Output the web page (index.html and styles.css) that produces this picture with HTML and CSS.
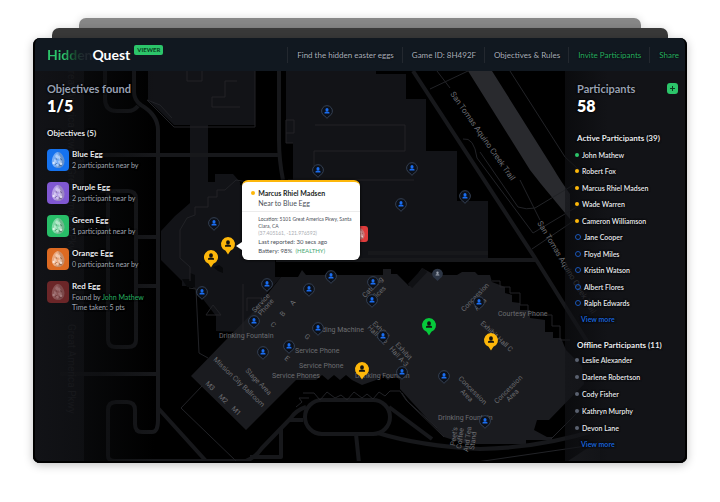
FILE: index.html
```html
<!DOCTYPE html>
<html lang="en">
<head>
<meta charset="utf-8">
<meta name="viewport" content="width=device-width, initial-scale=1">
<title>HiddenQuest Viewer</title>
<link rel="stylesheet" href="styles.css">
</head>
<body>
<svg class="defs" width="0" height="0" aria-hidden="true">
  <defs>
    <symbol id="egg" viewBox="0 0 22 22">
      <path d="M11 3C14 3 17.400 8 17.400 12.200C17.400 16.500 14.800 19 11.200 19C7.500 19 4.800 16.500 4.800 12.500C4.800 8 8 3 11 3Z" fill="#fff" opacity=".42"/>
      <path d="M11 3C14 3 17.400 8 17.400 12.200C17.400 16.500 14.800 19 11.200 19C10 19 8.800 18.700 7.800 18.200C13 17 15 12 11 3Z" fill="#000" opacity=".16"/>
      <path d="M8 7l2-2 2 3-2 2zM12 6l2 3-1 2-2-2zM7 10l2 1 1 3-3-1zM11 12l3-1 1 2-3 2zM9 15l2 0 1 2-2 1z" fill="#fff" opacity=".4"/>
      <circle cx="6.700" cy="14" r="1.200" fill="#fff" opacity=".7"/><circle cx="14" cy="14.700" r="1.200" fill="#fff" opacity=".7"/>
      <path d="M9 9l1 2M13 9l2 2M8 16l2-2M12 16l3 1" stroke="#000" stroke-width=".8" opacity=".3"/>
    </symbol>
    <symbol id="person" viewBox="0 0 10 10" overflow="visible">
      <path d="M5 .8a2.300 2.300 0 0 1 2.300 2.300v.8a2.300 2.300 0 0 1-4.600 0v-.8a2.300 2.300 0 0 1 2.300-2.300zM1.200 9V7.900Q1.200 6.500 3.200 6.400H6.800Q8.800 6.500 8.800 7.900V9Z"/>
    </symbol>
    <symbol id="pin" viewBox="0 0 14 16" overflow="visible">
      <path d="M7 14.400L4.800 12A5.400 5.400 0 1 1 9.200 12Z" fill="#0c1018" stroke="#344053"/>
      <use href="#person" x="3.700" y="3.500" width="6.600" height="6.600" fill="#1a6df0"/>
    </symbol>
    <symbol id="bigpin" viewBox="0 0 18 22" overflow="visible">
      <path d="M9 19.500L6.600 15.700A7 7 0 1 1 11.400 15.700Z"/>
      <use href="#person" x="5" y="4.600" width="8" height="8" fill="#111"/>
    </symbol>
  </defs>
</svg>
<div class="stage">
  <div class="sheet sheet-far"></div>
  <div class="sheet sheet-near"></div>
  <div class="window">
    <header class="topbar">
      <h1 class="logo"><span class="logo-hidden">Hidden</span>Quest</h1>
      <span class="badge">VIEWER</span>
      <nav class="nav">
        <span class="nav-item">Find the hidden easter eggs</span>
        <span class="nav-item">Game ID: 8H492F</span>
        <a class="nav-item" href="#rules">Objectives &amp; Rules</a>
        <a class="nav-item accent" href="#invite">Invite Participants</a>
        <a class="nav-item accent" href="#share">Share</a>
      </nav>
    </header>
    <main class="board">
      <svg class="map" viewBox="33 71 654 392" preserveAspectRatio="xMidYMid slice" role="img" aria-label="Venue map">
        <g fill="#121317">
          <path d="M148 71V100L174 125H190V203L182 210L175 216L161 231V260L182 281V286H191L196 290L216 316V331L240 332L268 292L281 277H275V185H240V182L233 174H215V182H208V125H255V71Z"/>
          <path d="M286 71V143H293V258H488V201H457V151H426V99H406V74H376V71Z"/>
          <path d="M33 71H84V463H33Z"/>
        </g>
        <path d="M468 71H492L553 168Q560 180 570 194V219L541 184L530 170Z" fill="#292a2e"/>
        <path d="M191 376L254 311L281 277H298L302 270L306 275H383V269H391V274H397L409 286L422 268L435 275H457L462 272H475L478 275H490L492 282L505 287V293L512 295V302L520 303V310L530 310V318L545 320V332H553V338H561L566 350L582 366L584 384L549 420H537L534 430L547 437H552V440H526V444H466L444 437L400 389V380L394 375L388 380L382 375L376 380L362 385L352 380L346 375L340 380L334 375L328 380L322 375L316 380H296L246 430Z" fill="#1a1b1f"/>
        <path d="M410 286L425 270" stroke="#101114" stroke-width="6"/>
        <path d="M213 267l6-2 4 3v5l-5-2zM182 279h8v-6l5 2v12h-8z" fill="#08090b"/>
        <g fill="none" stroke="#17181b" stroke-width="4" stroke-linejoin="round">
          <path d="M105 71V99Q105 111 117 111H128Q134 111 138 106M134 71V92Q134 100 141 105Q158 115 158 130V420Q158 432 152 432H142Q135 432 135 424V410Q135 402 127 402H116Q108 402 108 410V456Q108 461 115 461H206L158 408M100 155H280M100 191H128Q136 191 136 199V340Q136 347 128 347H116Q108 347 108 340V191M136 237H158M136 286H158M60 374H157"/>
          <path d="M279 71V140Q279 160 283 180M413 71L535 258L590 346M276 260H536M368 253H488"/>
          <rect x="305" y="400" width="85" height="34" rx="17"/>
          <path d="M206 461H246Q255 458 262 448L290 419Q296 410 306 407M281 429V457H250M290 420H303M356 434L359 463M389 407L432 439M378 433Q420 446 480 449Q540 448 600 429M206 461H246"/>
        </g>
        <g fill="none" stroke="#222327">
          <path d="M147 100L174 127H255V71M147 100L160 105L172 118M187 71V81H202V71M237 81H225V97H212V107H240M315 125H405V151H314V166M286 120H294V133H286zM286 133V143H293"/>
          <path d="M248 182L236 180L225 190H217V197H208V207H195V215L187 218L180 230V258L190 267V281M243 284V340M288 180H414M189 288L196 289L199 353L208 358M202 386L181 408L236 461M206 315L213 305L221 315ZM247 311V298H262"/>
          <path d="M430 89L468 71M437 71L450 88M463 139Q474 137 477 158L533 233L580 205M480 152L518 207Q526 210 535 208L575 184M532 249L575 220M510 71L565 157L590 180M520 180L540 220"/>
          <path d="M309 398L299 398L302 402L296 407M303 393H314L320 400L327 392L335 398L341 395L347 400L354 392L362 398L367 394L373 399L379 392L385 396L390 391H400L406 400L437 428M402 393L408 402L444 437M492 281H500V287H510V293H520V305H528V315H552V326H560V340H570M551 439L584 406M470 463L600 444"/>
        </g>
        <path d="M565 463L600 440V463Z" fill="#202124"/>
        <g class="road-labels">
          <text transform="translate(68 64) rotate(90)">Great America Pkwy</text>
          <text transform="translate(68 168) rotate(90)">Great America Pkwy</text>
          <text transform="translate(68 324) rotate(90)">Great America Pkwy</text>
        </g>
        <g class="trail-labels">
          <text transform="translate(450 94) rotate(55)">San Tomas Aquino Creek Trail</text>
          <text transform="translate(537 223) rotate(59)">San Tomas Aquino Creek Trail</text>
        </g>
        <g class="place-labels">
          <text x="219" y="338">Drinking Fountain</text>
          <text x="322" y="332">ding Machine</text>
          <text x="295" y="353">Service Phone</text>
          <text x="299" y="368">Service Phone</text>
          <text x="272" y="378">Service Phones</text>
          <text x="355" y="378">Drinking Fountain</text>
          <text x="438" y="420">Drinking Fountain</text>
          <text x="498" y="316">Courtesy Phone</text>
          <text transform="translate(255 313) rotate(-48)">Service</text>
          <text transform="translate(261 316) rotate(-48)">Phone</text>
          <text transform="translate(213 360) rotate(44)">Mission City Ballroom</text>
          <text transform="translate(245 371) rotate(46)">Stage Area</text>
          <text transform="translate(205 384) rotate(45)">M3</text>
          <text transform="translate(218 397) rotate(45)">M2</text>
          <text transform="translate(231 409) rotate(45)">M1</text>
          <text transform="translate(293 306) rotate(-50)">A</text>
          <text transform="translate(283 317) rotate(-50)">B</text>
          <text transform="translate(270 325) rotate(40)">C</text>
          <text transform="translate(284 359) rotate(40)">E</text>
          <text transform="translate(304 337) rotate(40)">G</text>
          <text transform="translate(365 298) rotate(-45)">Catering</text>
          <text transform="translate(371 304) rotate(-45)">Offices</text>
          <text transform="translate(372 324) rotate(45)">Exhibit</text>
          <text transform="translate(367 328) rotate(45)">Hall A-2</text>
          <text transform="translate(395 345) rotate(48)">Exhibit</text>
          <text transform="translate(389 349) rotate(48)">Hall A-3</text>
          <text transform="translate(464 312) rotate(-46)">Concession</text>
          <text transform="translate(477 311) rotate(-46)">Area</text>
          <text transform="translate(480 324) rotate(43)">Exhibit Hall C</text>
          <text transform="translate(458 379) rotate(45)">Concession</text>
          <text transform="translate(460 392) rotate(45)">Area</text>
          <text transform="translate(497 404) rotate(-45)">Concession</text>
          <text transform="translate(509 402) rotate(-45)">Area</text>
          <text transform="translate(455 446) rotate(-82)">Peet's</text>
          <text transform="translate(461 449) rotate(-82)">Coffee</text>
          <text transform="translate(468 452) rotate(-82)">And Tea</text>
          <text transform="translate(474 450) rotate(-82)">Stand</text>
        </g>
        <g>
          <use href="#pin" x="320" y="104" width="14" height="16"/>
          <use href="#pin" x="311" y="163" width="14" height="16"/>
          <use href="#pin" x="405" y="161" width="14" height="16"/>
          <use href="#pin" x="394" y="197" width="14" height="16"/>
          <use href="#pin" x="458" y="189" width="14" height="16"/>
          <use href="#pin" x="207" y="216" width="14" height="16"/>
          <use href="#pin" x="195" y="285" width="14" height="16"/>
          <use href="#pin" x="260" y="277" width="14" height="16"/>
          <use href="#pin" x="324" y="269" width="14" height="16"/>
          <use href="#pin" x="302" y="282" width="14" height="16"/>
          <use href="#pin" x="366" y="275" width="14" height="16"/>
          <use href="#pin" x="365" y="293" width="14" height="16"/>
          <use href="#pin" x="247" y="314" width="14" height="16"/>
          <use href="#pin" x="256" y="345" width="14" height="16"/>
          <use href="#pin" x="282" y="339" width="14" height="16"/>
          <use href="#pin" x="311" y="321" width="14" height="16"/>
          <use href="#pin" x="376" y="329" width="14" height="16"/>
          <use href="#pin" x="395" y="365" width="14" height="16"/>
          <use href="#pin" x="437" y="369" width="14" height="16"/>
          <use href="#pin" x="478" y="414" width="14" height="16"/>
          <use href="#pin" x="472" y="295" width="14" height="16"/>
          <path d="M437.500 281L435 278.600A5.300 5.300 0 1 1 440 278.600Z" fill="#2c3544"/>
          <use href="#person" x="435" y="271" width="5" height="5" fill="#9aa1ad"/>
        </g>
        <g fill="#fdb70a">
          <use href="#bigpin" x="219" y="235" width="18" height="22"/>
          <use href="#bigpin" x="202" y="248" width="18" height="22"/>
          <use href="#bigpin" x="353" y="360" width="18" height="22"/>
          <use href="#bigpin" x="482" y="331" width="18" height="22"/>
          <use href="#bigpin" x="420" y="316" width="18" height="22" fill="#06c93b"/>
        </g>
        <rect x="352" y="226" width="16" height="16" rx="3" fill="#e03c3c"/>
        <use href="#egg" x="352" y="226" width="16" height="16"/>
      </svg>

      <section class="side objectives">
        <h2 class="side-title">Objectives found</h2>
        <p class="count">1/5</p>
        <h3 class="list-title">Objectives (5)</h3>
        <ul class="eggs">
          <li class="egg"><svg class="tile blue" viewBox="0 0 22 22"><use href="#egg"/></svg><div><h4>Blue Egg</h4><p>2 participants near by</p></div></li>
          <li class="egg"><svg class="tile purple" viewBox="0 0 22 22"><use href="#egg"/></svg><div><h4>Purple Egg</h4><p>2 participant near by</p></div></li>
          <li class="egg"><svg class="tile green" viewBox="0 0 22 22"><use href="#egg"/></svg><div><h4>Green Egg</h4><p>1 participant near by</p></div></li>
          <li class="egg"><svg class="tile orange" viewBox="0 0 22 22"><use href="#egg"/></svg><div><h4>Orange Egg</h4><p>0 participants near by</p></div></li>
          <li class="egg"><svg class="tile red" viewBox="0 0 22 22"><use href="#egg" opacity=".5"/></svg><div><h4>Red Egg</h4><p>Found by <a class="accent" href="#john">John Mathew</a></p><p>Time taken: 5 pts</p></div></li>
        </ul>
      </section>

      <aside class="side participants">
        <div class="side-head">
          <h2 class="side-title">Participants</h2>
          <button class="add" type="button" aria-label="Add participant"><svg viewBox="0 0 11 11"><path d="M5.500 3V8M3 5.500H8" stroke="#0b3d20" fill="none"/></svg></button>
        </div>
        <p class="count">58</p>
        <h3 class="list-title">Active Participants (39)</h3>
        <ul class="people active">
          <li class="found">John Mathew</li>
          <li class="near">Robert Fox</li>
          <li class="near">Marcus Rhiel Madsen</li>
          <li class="near">Wade Warren</li>
          <li class="near">Cameron Williamson</li>
          <li class="roaming">Jane Cooper</li>
          <li class="roaming">Floyd Miles</li>
          <li class="roaming">Kristin Watson</li>
          <li class="roaming">Albert Flores</li>
          <li class="roaming">Ralph Edwards</li>
        </ul>
        <a class="more" href="#active">View more</a>
        <h3 class="list-title offline-title">Offline Participants (11)</h3>
        <ul class="people offline">
          <li>Leslie Alexander</li>
          <li>Darlene Robertson</li>
          <li>Cody Fisher</li>
          <li>Kathryn Murphy</li>
          <li>Devon Lane</li>
        </ul>
        <a class="more" href="#offline">View more</a>
      </aside>

      <article class="tooltip">
        <div class="tip-head">
          <h3>Marcus Rhiel Madsen</h3>
          <p>Near to Blue Egg</p>
        </div>
        <div class="tip-body">
          <p class="place">Location: 5101 Great America Pkwy, Santa Clara, CA <span class="coords">(37.405161, -121.976592)</span></p>
          <p>Last reported: 30 secs ago</p>
          <p>Battery: 98% &nbsp;<span class="healthy">(HEALTHY)</span></p>
        </div>
      </article>
    </main>
  </div>
</div>
</body>
</html>
```
FILE: styles.css
```css
* { box-sizing: border-box; }
body, h1, h2, h3, h4, p, ul { margin: 0; padding: 0; }
ul { list-style: none; }
a { color: inherit; text-decoration: none; }
.defs { position: absolute; }

body {
  background: #fff;
  color: #e8eaee;
  font-family: Lato, "Liberation Sans", sans-serif;
  font-size: 8px;
  line-height: 10px;
}

.stage {
  display: flex;
  flex-direction: column;
  min-height: 100vh;
  padding: 18px 33px 39px;
}
.sheet { height: 10px; border-radius: 7px 7px 0 0; box-shadow: 0 0 8px rgba(0, 0, 0, .15); }
.sheet-far { margin: 0 46px; background: #888; }
.sheet-near { margin: 0 19px; background: #393939; }

.window {
  flex: 1;
  display: flex;
  flex-direction: column;
  position: relative;
  overflow: hidden;
  border-radius: 7px;
  background: #000;
  box-shadow: 0 2px 10px rgba(0, 0, 0, .25);
}
.window::after {
  content: "";
  position: absolute;
  inset: 0;
  border: 2px solid #000;
  border-top: 0;
  border-radius: 7px;
  pointer-events: none;
}

.topbar {
  display: flex;
  align-items: center;
  height: 33px;
  padding: 0 8px 0 14px;
  background: #111820;
}
.logo {
  font-size: 14px;
  line-height: 20px;
  font-weight: 700;
  color: #fff;
}
.logo-hidden {
  background: linear-gradient(90deg, #2cc56a 40%, #17502f 58%, #20272e 80%);
  background-clip: text;
  -webkit-background-clip: text;
  color: transparent;
}
.badge {
  align-self: flex-start;
  margin: 7px 0 0 4px;
  padding: 0 3px;
  border-radius: 2px;
  background: #2cc56a;
  color: #0b3d20;
  font-size: 6px;
  font-weight: 700;
}
.nav { display: flex; margin-left: auto; }
.nav-item {
  padding: 0 8px 0 9px;
  border-left: 1px solid #23282f;
  color: #a9afbb;
  line-height: 16px;
  white-space: nowrap;
  text-shadow: 0 0 2px #000;
}
.nav-item:last-child { padding-right: 0; }
.accent { color: #27ae60; }

.board {
  flex: 1;
  display: flex;
  justify-content: space-between;
  position: relative;
}
.map { position: absolute; inset: 0; width: 100%; height: 100%; background: #000; }
.map text { font-family: Roboto, sans-serif; }
.road-labels { font-size: 10px; fill: #2a2b30; }
.trail-labels { font-size: 8px; fill: #6a6b70; }
.place-labels { font-size: 7px; fill: #6c6d71; }

.side { position: relative; text-shadow: 0 0 2px #000, 0 0 2px #000; }
.objectives {
  width: 122px;
  padding: 10px 0 0 14px;
  background: linear-gradient(90deg, rgba(18, 19, 23, .8) 0%, rgba(10, 11, 13, .6) 55%, transparent 100%);
}
.participants {
  width: 122px;
  padding: 10px 9px 10px 12px;
  background: linear-gradient(90deg, rgba(18, 19, 23, .6), #121317 35%);
}
.side-head { display: flex; justify-content: space-between; align-items: center; }
.side-title { color: #99a1b3; font-size: 11px; line-height: 15px; font-weight: 700; white-space: nowrap; }
.count { color: #fff; font-size: 16px; line-height: 20px; font-weight: 800; }
.list-title { font-size: 8px; line-height: 10px; font-weight: 700; white-space: nowrap; }
.objectives .list-title { margin-top: 12px; }
.participants .list-title { margin-top: 17px; }

.eggs { display: grid; gap: 11px; margin-top: 11px; }
.egg { display: flex; gap: 3px; min-height: 22px; white-space: nowrap; }
.tile { width: 22px; height: 22px; border-radius: 4px; }
.blue { background: #1572ee; }
.purple { background: #8058d2; }
.green { background: #28be68; }
.orange { background: #dc6a22; }
.red { background: #6b2628; }
.egg h4 { font-size: 8px; line-height: 11px; font-weight: 700; }
.egg p { color: #a2a8b4; font-size: 7px; line-height: 10px; }
.egg .accent { color: #27ae60; }

.add {
  width: 11px;
  height: 11px;
  padding: 0;
  border: 0;
  border-radius: 3px;
  background: #2cc56a;
}
.add svg { display: block; width: 11px; height: 11px; }

.people { display: flex; flex-direction: column; justify-content: space-between; font-size: 7px; font-weight: 600; }
.people li { display: flex; align-items: center; gap: 3px; line-height: 12px; white-space: nowrap; }
.people li::before {
  content: "";
  width: 4px;
  height: 4px;
  margin-left: -2px;
  border-radius: 50%;
  background: #5a6170;
}
.people .found::before { background: #2cc56a; }
.people .near::before { background: #fdb70a; }
.people .roaming::before { background: none; border: 1px solid #1a56b8; }
.active { height: 160px; margin-top: 6px; }
.offline { height: 80px; margin-top: 4px; }
.more { display: block; margin: 5px 0 0 4px; color: #1b63d6; font-size: 7px; font-weight: 700; }
.participants .offline-title { margin-top: 16px; }

.tooltip {
  position: absolute;
  left: 32%;
  top: 109px;
  width: 118px;
  border-top: 2px solid #fdb70a;
  border-radius: 6px;
  background: #fff;
  color: #4a4f58;
  box-shadow: 0 0 3px #000;
}
.tooltip::before {
  content: "";
  position: absolute;
  left: -6px;
  top: 60px;
  border: solid transparent;
  border-width: 4px 6px 4px 0;
  border-right-color: #fff;
}
.tip-head { padding: 6px 4px 3px 16px; border-bottom: 1px solid #ececec; font-size: 7px; }
.tip-head h3 { position: relative; color: #1c1f25; font-size: 7px; font-weight: 700; }
.tip-head h3::before {
  content: "";
  position: absolute;
  left: -7px;
  top: 3px;
  width: 4px;
  height: 4px;
  border-radius: 50%;
  background: #fdb70a;
}
.tip-body { padding: 4px 4px 5px 16px; font-size: 6px; line-height: 9px; white-space: nowrap; }
.place { font-size: 5px; line-height: 7px; white-space: normal; }
.coords { display: block; color: #a8abb1; }
.healthy { color: #45a873; }
```
